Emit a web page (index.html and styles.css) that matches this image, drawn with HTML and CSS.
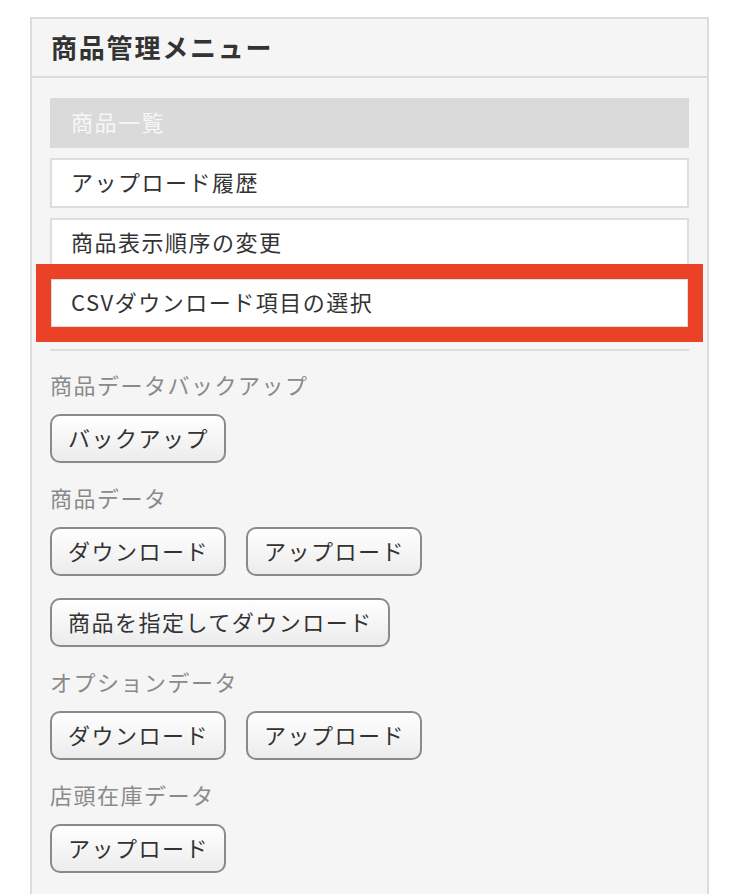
FILE: index.html
```html
<!DOCTYPE html>
<html lang="ja">
<head>
<meta charset="utf-8">
<title>商品管理メニュー</title>
<link rel="stylesheet" href="styles.css">
</head>
<body>
<div class="panel">
  <div class="panel-head">
    <h2 class="panel-title">商品管理メニュー</h2>
  </div>
  <div class="panel-body">
    <ul class="menu">
      <li class="menu-item is-active">商品一覧</li>
      <li class="menu-item">アップロード履歴</li>
      <li class="menu-item">商品表示順序の変更</li>
      <li class="menu-item is-marked">CSVダウンロード項目の選択</li>
    </ul>
    <div class="divider"></div>
    <section class="group">
      <h3 class="group-label">商品データバックアップ</h3>
      <div class="btns">
        <button class="btn">バックアップ</button>
      </div>
    </section>
    <section class="group">
      <h3 class="group-label">商品データ</h3>
      <div class="btns">
        <button class="btn">ダウンロード</button>
        <button class="btn">アップロード</button>
        <button class="btn">商品を指定してダウンロード</button>
      </div>
    </section>
    <section class="group">
      <h3 class="group-label">オプションデータ</h3>
      <div class="btns">
        <button class="btn">ダウンロード</button>
        <button class="btn">アップロード</button>
      </div>
    </section>
    <section class="group">
      <h3 class="group-label">店頭在庫データ</h3>
      <div class="btns">
        <button class="btn">アップロード</button>
      </div>
    </section>
  </div>
</div>
</body>
</html>
```

FILE: styles.css
```css
* {
  box-sizing: border-box;
}

html, body {
  margin: 0;
  padding: 0;
  background: #ffffff;
}

body {
  padding: 17px 0 0 30px;
  font-family: "Noto Sans CJK JP", "Noto Sans", sans-serif;
  color: #333333;
}

.panel {
  width: 679px;
  background: #f5f5f5;
  border: 2px solid #dcdcdc;
}

.panel-head {
  height: 59px;
  border-bottom: 2px solid #dcdcdc;
  display: flex;
  align-items: center;
  padding: 0 0 2px 19px;
}

.panel-title {
  margin: 0;
  font-size: 26px;
  font-weight: 700;
  letter-spacing: 1.8px;
  line-height: 1;
  color: #333333;
}

.panel-body {
  padding: 20px 18px 22px 18px;
}

.menu {
  list-style: none;
  margin: 0;
  padding: 0;
  display: flex;
  flex-direction: column;
  gap: 10px;
}

.menu-item {
  height: 50px;
  display: flex;
  align-items: center;
  padding: 0 0 4px 19px;
  background: #ffffff;
  border: 2px solid #dddddd;
  font-size: 22px;
  letter-spacing: 1.5px;
  color: #333333;
}

.menu-item.is-active {
  background: #dadada;
  border-color: #dadada;
  color: #f7f7f7;
}

.menu-item.is-marked {
  outline: 15px solid #ea4127;
  outline-offset: -1px;
  position: relative;
}

.divider {
  height: 2px;
  background: #dddddd;
  margin-top: 21px;
  margin-bottom: 20px;
}

.group {
  margin-bottom: 21px;
}

.group-label {
  margin: 0 0 13px 0;
  height: 30px;
  line-height: 26px;
  padding-bottom: 4px;
  font-size: 22px;
  font-weight: 400;
  letter-spacing: 1.5px;
  color: #8a8a8a;
}

.btns {
  display: flex;
  flex-wrap: wrap;
  column-gap: 20px;
  row-gap: 22px;
}

.btn {
  height: 49px;
  padding: 0 15px 4px 16px;
  border: 2px solid #8a8a8a;
  border-radius: 10px;
  background: linear-gradient(#ffffff, #ececec);
  font-family: "Noto Sans CJK JP", "Noto Sans", sans-serif;
  font-size: 22px;
  letter-spacing: 1.5px;
  color: #333333;
  line-height: 1;
}
```
